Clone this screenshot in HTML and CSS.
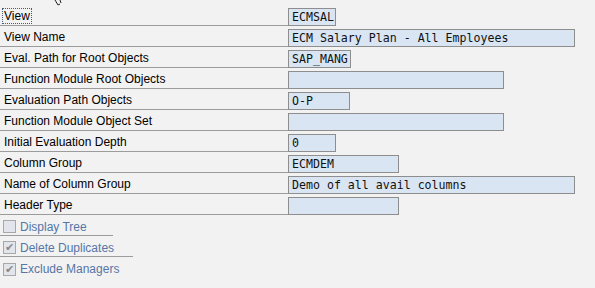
FILE: index.html
```html
<!DOCTYPE html>
<html lang="en">
<head>
    <meta charset="UTF-8">
    <title>View Settings</title>
    <link rel="stylesheet" href="styles.css">
</head>
<body>
    <svg class="cursor" width="12" height="8" viewBox="0 0 12 8">
        <path d="M3 0 L6 5 L8 4" fill="none" stroke="#222" stroke-width="1"/>
        <path d="M8 0 L9 3" fill="none" stroke="#222" stroke-width="1"/>
    </svg>

    <div class="form">
        <div class="row">
            <div class="label"><span class="focus">View</span></div>
            <div class="field w47">ECMSAL</div>
        </div>
        <div class="row">
            <div class="label">View Name</div>
            <div class="field w286">ECM Salary Plan - All Employees</div>
        </div>
        <div class="row">
            <div class="label">Eval. Path for Root Objects</div>
            <div class="field w62">SAP_MANG</div>
        </div>
        <div class="row">
            <div class="label">Function Module Root Objects</div>
            <div class="field w215"></div>
        </div>
        <div class="row">
            <div class="label">Evaluation Path Objects</div>
            <div class="field w61">O-P</div>
        </div>
        <div class="row">
            <div class="label">Function Module Object Set</div>
            <div class="field w215"></div>
        </div>
        <div class="row">
            <div class="label">Initial Evaluation Depth</div>
            <div class="field w47">0</div>
        </div>
        <div class="row">
            <div class="label">Column Group</div>
            <div class="field w110">ECMDEM</div>
        </div>
        <div class="row">
            <div class="label">Name of Column Group</div>
            <div class="field w286">Demo of all avail columns</div>
        </div>
        <div class="row">
            <div class="label">Header Type</div>
            <div class="field w110"></div>
        </div>

        <div class="check-row w113">
            <span class="box"></span>
            <span class="check-label">Display Tree</span>
        </div>
        <div class="check-row w133">
            <span class="box checked">&#10004;</span>
            <span class="check-label">Delete Duplicates</span>
        </div>
        <div class="check-row last">
            <span class="box checked">&#10004;</span>
            <span class="check-label">Exclude Managers</span>
        </div>
    </div>
</body>
</html>
```

FILE: styles.css
```css
* {
    margin: 0;
    padding: 0;
    box-sizing: border-box;
}

body {
    background: #f2f2f2;
    font-family: 'Liberation Sans', Arial, sans-serif;
    font-size: 12px;
    color: #000;
    width: 595px;
    height: 288px;
    overflow: hidden;
    position: relative;
}

.cursor {
    position: absolute;
    left: 52px;
    top: 0;
}

.form {
    padding-top: 8px;
}

/* Label + input rows */
.row {
    display: flex;
    height: 18px;
    margin-bottom: 3px;
}

.label {
    width: 288px;
    border-bottom: 1px solid #9c9c9c;
    padding-left: 4px;
    line-height: 17px;
    white-space: nowrap;
}

.focus {
    display: inline-block;
    margin-left: -2px;
    padding: 0 1px;
    border: 1px dotted #4a5a7a;
    line-height: 14px;
}

.field {
    height: 18px;
    background: #d9e5f3;
    border: 1px solid #8e8e8e;
    font-family: 'DejaVu Sans Mono', 'Liberation Mono', monospace;
    font-size: 11.6px;
    line-height: 16px;
    padding-left: 3px;
    white-space: pre;
    color: #111;
}

.w47 { width: 48px; }
.w61 { width: 62px; }
.w62 { width: 63px; }
.w110 { width: 111px; }
.w215 { width: 216px; }
.w286 { width: 287px; }

/* Checkbox rows */
.check-row {
    display: flex;
    align-items: center;
    height: 18px;
    margin-bottom: 3px;
    border-bottom: 1px solid #9c9c9c;
}

.check-row.w113 { width: 113px; }
.check-row.w133 { width: 133px; }
.check-row.last { border-bottom: none; }

.box {
    width: 13px;
    height: 13px;
    margin-left: 3px;
    margin-right: 4px;
    border: 1px solid #a8a8a8;
    background: #e2e6ec;
    color: #8a8a8a;
    font-size: 11px;
    line-height: 11px;
    text-align: center;
}

.check-label {
    color: #5676a6;
}
```
